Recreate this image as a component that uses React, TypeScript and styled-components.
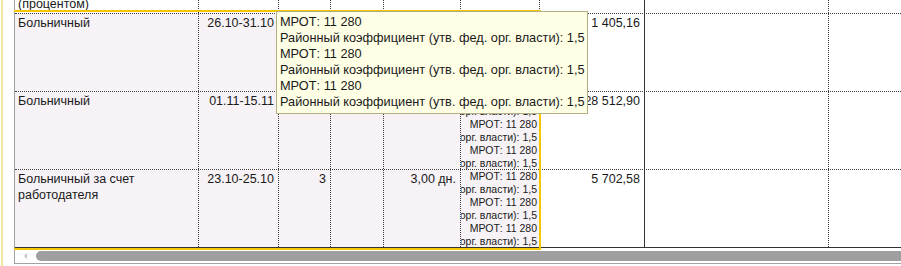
import React from 'react';
import styled, { createGlobalStyle } from 'styled-components';

const GlobalStyle = createGlobalStyle`
    html, body {
        margin: 0;
        padding: 0;
        background: #ffffff;
    }
    body {
        font-family: 'Liberation Sans', Arial, sans-serif;
        color: #1a1a1a;
    }
`;

const COLUMNS = '184px 80px 52px 53px 77px 79px 105px 184px 1fr';

const Window = styled.div`
    width: 901px;
    height: 266px;
    overflow: hidden;
    padding-left: 1px;
    box-sizing: border-box;
    display: flex;
`;

const Edge = styled.div`
    flex: 1;
    border-left: 2px solid #f2e79c;
    padding-left: 11px;
    min-width: 0;
`;

const Panel = styled.div`
    position: relative;
    border-left: 1px solid #a3a3a3;
    border-bottom: 1px solid #a3a3a3;
    display: flex;
    flex-direction: column;
`;

const Row = styled.div<{ $height: number; $top?: boolean }>`
    display: grid;
    grid-template-columns: ${COLUMNS};
    height: ${(p) => p.$height}px;
    box-sizing: border-box;
    border-top: ${(p) => (p.$top ? '1px dotted #3a3a3a' : 'none')};
    overflow: hidden;
`;

const Cell = styled.div<{
    $align?: 'left' | 'right';
    $shaded?: boolean;
    $edge?: 'dotted' | 'solid' | 'none';
    $bottom?: boolean;
}>`
    box-sizing: border-box;
    min-width: 0;
    overflow: hidden;
    background: ${(p) => (p.$shaded ? '#f6f2f6' : '#ffffff')};
    border-right: ${(p) =>
        p.$edge === 'solid'
            ? '1px solid #333333'
            : p.$edge === 'none'
            ? 'none'
            : '1px dotted #3a3a3a'};
    text-align: ${(p) => p.$align || 'left'};
    font-size: 12.5px;
    line-height: 16px;
    padding: 1px 4px 0 3px;
    display: flex;
    flex-direction: column;
    justify-content: ${(p) => (p.$bottom ? 'flex-end' : 'flex-start')};
`;

const HeadText = styled.span`
    margin-bottom: 1px;
`;

const Notes = styled(Cell)`
    padding: 0 2px 0 0;
    font-size: 10.5px;
    line-height: 13px;
    white-space: nowrap;
    align-items: flex-end;
`;

const NoteLine = styled.div`
    white-space: nowrap;
`;

const ScrollArea = styled.div`
    height: 16px;
    border-top: 1px solid #333333;
    box-sizing: border-box;
    display: flex;
    align-items: center;
    padding-left: 9px;
    gap: 9px;
`;

const Arrow = styled.div`
    width: 0;
    height: 0;
    border-top: 3px solid transparent;
    border-bottom: 3px solid transparent;
    border-right: 3px solid #c4c4c4;
    margin-top: 1px;
`;

const Thumb = styled.div`
    flex: 1;
    height: 10px;
    margin-top: 1px;
    background: #a09fa0;
    border-radius: 5px 0 0 5px;
`;

const Selection = styled.div`
    position: absolute;
    left: -1px;
    top: 10px;
    width: 527px;
    height: 240px;
    box-sizing: border-box;
    border-top: 2px solid #f6c600;
    border-right: 2px solid #f6c600;
    border-bottom: 2px solid #f6c600;
    pointer-events: none;
`;

const Tooltip = styled.div`
    position: absolute;
    left: 261px;
    top: 11px;
    width: 312px;
    height: 103px;
    box-sizing: border-box;
    background: #ffffe6;
    border: 1px solid #b4ae86;
    padding: 2px 3px 0 3px;
    font-size: 12.75px;
    line-height: 16.1px;
    white-space: nowrap;
    overflow: hidden;
`;

const MROT = 'МРОТ: 11 280';
const KOEF = 'Районный коэффициент (утв. фед. орг. власти): 1,5';
const notes = [MROT, KOEF, MROT, KOEF, MROT, KOEF];

type Entry = {
    name: string;
    period: string;
    days: string;
    hours: string;
    paid: string;
    sum: string;
    notes: string[];
};

// the first two rows sit partly under the tooltip, so what it covers stays blank
const rows: Entry[] = [
    { name: 'Больничный', period: '26.10-31.10', days: '', hours: '', paid: '', sum: '1 405,16', notes: [] },
    { name: 'Больничный', period: '01.11-15.11', days: '', hours: '', paid: '', sum: '28 512,90', notes },
    { name: 'Больничный за счет работодателя', period: '23.10-25.10', days: '3', hours: '', paid: '3,00 дн.', sum: '5 702,58', notes },
];

function DataRow({ row }: { row: Entry }) {
    return (
        <Row $height={78} $top>
            <Cell $shaded>{row.name}</Cell>
            <Cell $shaded $align="right">{row.period}</Cell>
            <Cell $shaded $align="right">{row.days}</Cell>
            <Cell $shaded $align="right">{row.hours}</Cell>
            <Cell $shaded $align="right">{row.paid}</Cell>
            <Notes $shaded>
                {row.notes.map((n, i) => (
                    <NoteLine key={i}>{n}</NoteLine>
                ))}
            </Notes>
            <Cell $align="right" $edge="solid">{row.sum}</Cell>
            <Cell />
            <Cell $edge="none" />
        </Row>
    );
}

export default function App() {
    return (
        <>
            <GlobalStyle />
            <Window>
                <Edge>
                    <Panel>
                        <Row $height={13}>
                            <Cell $bottom>
                                <HeadText>(процентом)</HeadText>
                            </Cell>
                            <Cell />
                            <Cell />
                            <Cell />
                            <Cell />
                            <Cell />
                            <Cell $edge="solid" />
                            <Cell />
                            <Cell $edge="none" />
                        </Row>
                        {rows.map((r, i) => (
                            <DataRow key={i} row={r} />
                        ))}
                        <ScrollArea>
                            <Arrow />
                            <Thumb />
                        </ScrollArea>
                        <Selection />
                        <Tooltip>
                            {notes.map((n, i) => (
                                <div key={i}>{n}</div>
                            ))}
                        </Tooltip>
                    </Panel>
                </Edge>
            </Window>
        </>
    );
}
